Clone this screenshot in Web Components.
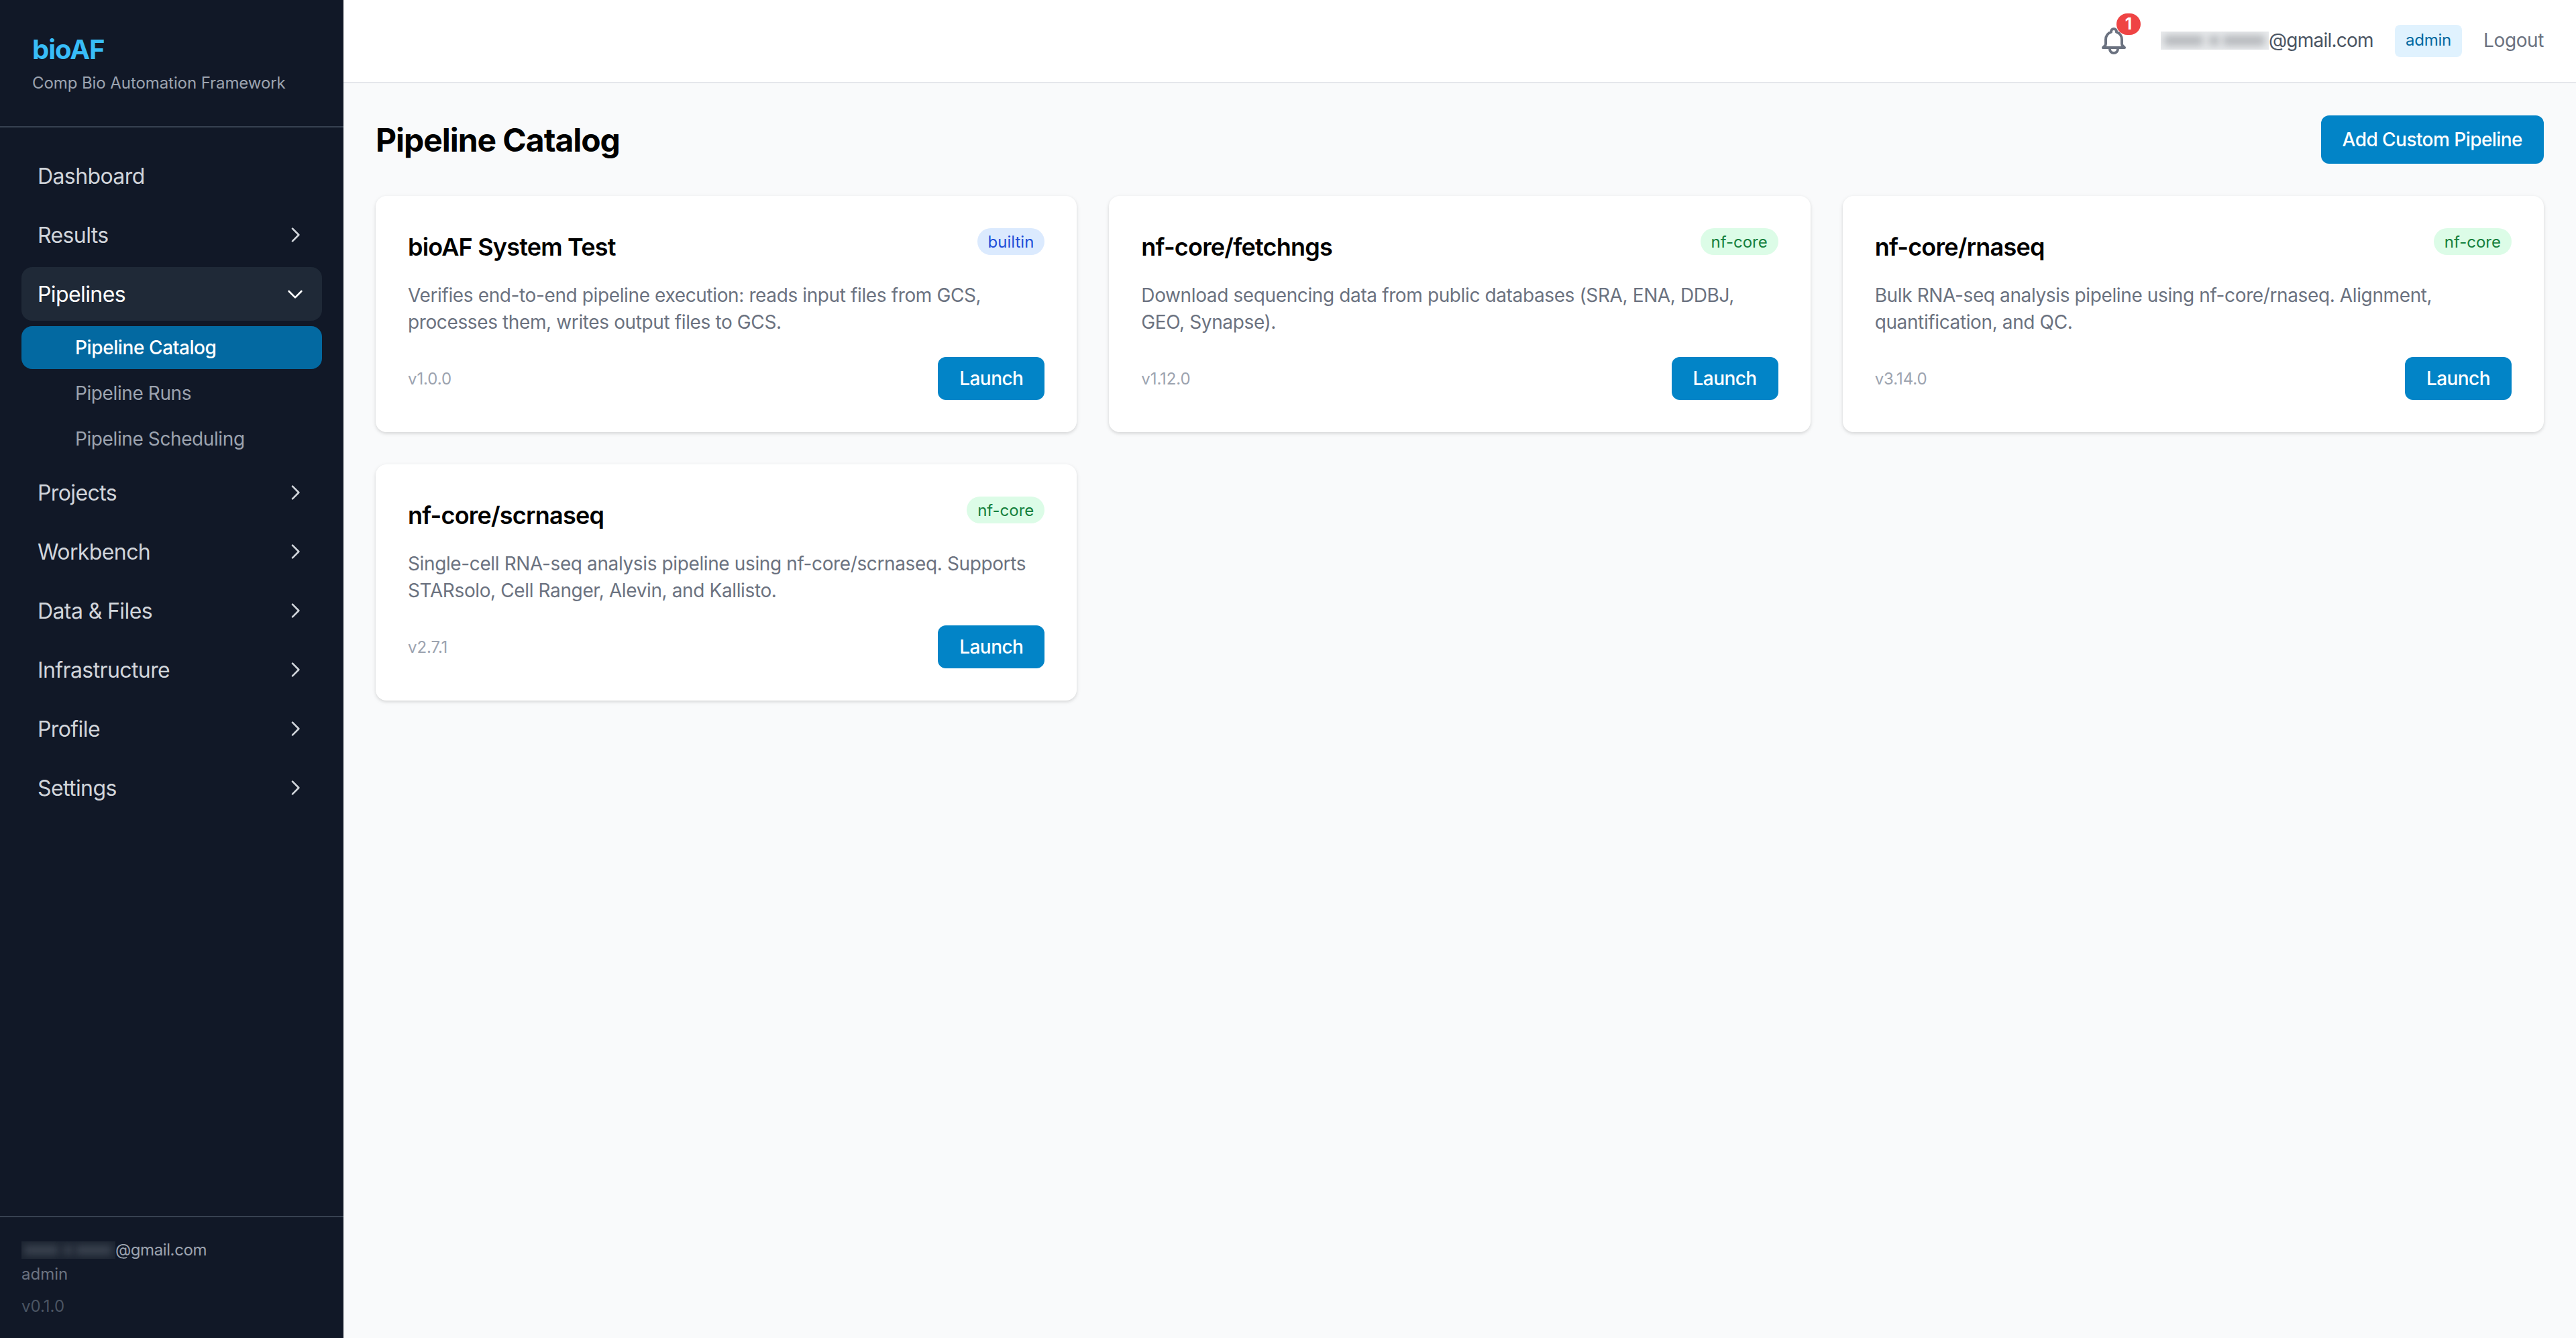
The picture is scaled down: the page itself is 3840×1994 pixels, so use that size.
<!DOCTYPE html>
<html lang="en"><head><meta charset="utf-8"><title>bioAF</title>
<style>
html,body{margin:0;height:100%;}
body{font-family:Inter,"Liberation Sans",sans-serif;background:#f9fafb;color:#000;}
</style></head><body>
<bio-app>
  <bio-sidebar slot="side" user-role="admin" version="v0.1.0">
    <nav-item>Dashboard</nav-item>
    <nav-item chevron="right">Results</nav-item>
    <nav-item chevron="down" open>Pipelines</nav-item>
    <sub-list>
      <sub-item active>Pipeline Catalog</sub-item>
      <sub-item>Pipeline Runs</sub-item>
      <sub-item>Pipeline Scheduling</sub-item>
    </sub-list>
    <nav-item chevron="right">Projects</nav-item>
    <nav-item chevron="right">Workbench</nav-item>
    <nav-item chevron="right">Data &amp; Files</nav-item>
    <nav-item chevron="right">Infrastructure</nav-item>
    <nav-item chevron="right">Profile</nav-item>
    <nav-item chevron="right">Settings</nav-item>
  </bio-sidebar>
  <top-bar slot="top"></top-bar>
  <page-head><action-button size="lg">Add Custom Pipeline</action-button></page-head>
  <card-grid>
    <pipeline-card name="bioAF System Test" tag="builtin" version="v1.0.0">Verifies end-to-end pipeline execution: reads input files from GCS, processes them, writes output files to GCS.</pipeline-card>
    <pipeline-card name="nf-core/fetchngs" tag="nf-core" version="v1.12.0">Download sequencing data from public databases (SRA, ENA, DDBJ, GEO, Synapse).</pipeline-card>
    <pipeline-card name="nf-core/rnaseq" tag="nf-core" version="v3.14.0">Bulk RNA-seq analysis pipeline using nf-core/rnaseq. Alignment, quantification, and QC.</pipeline-card>
    <pipeline-card name="nf-core/scrnaseq" tag="nf-core" version="v2.7.1">Single-cell RNA-seq analysis pipeline using nf-core/scrnaseq. Supports STARsolo, Cell Ranger, Alevin, and Kallisto.</pipeline-card>
  </card-grid>
</bio-app>
<script>
const def=(name,html,init)=>customElements.define(name,class extends HTMLElement{
  constructor(){super();this.attachShadow({mode:'open'});}
  connectedCallback(){this.shadowRoot.innerHTML=typeof html==='function'?html(this):html;}
});
const chev={right:'M9 5l7 7-7 7',down:'M19 9l-7 7-7-7'};

def('bio-app',`<style>
:host{display:grid;grid-template-columns:512px 1fr;grid-template-rows:124px 1fr;height:100vh;min-height:1994px;box-sizing:border-box}
.side{grid-row:1/3;display:flex;min-height:0}
.top{display:flex;min-width:0}
main{padding:48px;min-width:0}
</style><div class="side"><slot name="side"></slot></div><div class="top"><slot name="top"></slot></div><main><slot></slot></main>`);

def('redact-blur',e=>{const dark=e.hasAttribute('dark');const w=e.getAttribute('w'),h=e.getAttribute('h');
return `<style>
:host{display:inline-block;width:${w}px;height:${h}px;overflow:hidden;position:relative;vertical-align:middle;background:${dark?'#1c2431':'#e9ebed'}}
i{position:absolute;top:6px;bottom:6px;background:${dark?'#3b4350':'#b4b7bb'};filter:blur(6px)}
</style><i style="left:3%;width:36%"></i><i style="left:45%;width:9%"></i><i style="left:58%;width:38%"></i>`});

def('bio-sidebar',e=>`<style>
:host{display:flex;flex-direction:column;width:512px;background:#111827;color:#d1d5db;box-sizing:border-box}
header{padding:46px 48px 48px;border-bottom:2px solid #374151}
h1{margin:0;font-size:40px;line-height:56px;font-weight:700;color:#38bdf8;letter-spacing:-1px}
p{margin:6px 0 0;font-size:24px;line-height:32px;color:#9ca3af;letter-spacing:-.08px}
nav{flex:1;padding:32px 32px;display:flex;flex-direction:column;gap:8px}
footer{border-top:2px solid #374151;padding:33px 32px 31px;font-size:24px;line-height:32px;color:#9ca3af}
.mail{display:flex;align-items:center;letter-spacing:-.4px}
.role{margin-top:4px;color:#6b7280}
.ver{margin-top:16px;color:#4b5563}
</style>
<header><h1>bioAF</h1><p>Comp Bio Automation Framework</p></header>
<nav><slot></slot></nav>
<footer><div class="mail"><redact-blur dark w="140" h="26"></redact-blur><span>@gmail.com</span></div><div class="role">${e.getAttribute('user-role')}</div><div class="ver">${e.getAttribute('version')}</div></footer>`);

def('nav-item',e=>{const c=e.getAttribute('chevron'),open=e.hasAttribute('open');
return `<style>
:host{display:flex;align-items:center;justify-content:space-between;height:80px;padding:0 24px;box-sizing:border-box;border-radius:16px;font-size:32px;letter-spacing:-.6px;font-weight:400;color:${open?'#fff':'#d1d5db'};background:${open?'#1f2937':'transparent'}}
svg{width:32px;height:32px;flex:none;fill:none;stroke:currentColor;stroke-width:2;stroke-linecap:round;stroke-linejoin:round}
</style><span><slot></slot></span>${c?`<svg viewBox="0 0 24 24"><path d="${chev[c]}"/></svg>`:''}`});

def('sub-list',`<style>:host{display:flex;flex-direction:column;gap:4px}</style><slot></slot>`);
def('sub-item',e=>{const a=e.hasAttribute('active');
return `<style>
:host{display:flex;align-items:center;height:64px;padding-left:80px;border-radius:16px;font-size:28px;letter-spacing:-.4px;font-weight:${a?500:400};color:${a?'#fff':'#9ca3af'};background:${a?'#0369a1':'transparent'}}
</style><slot></slot>`});

def('top-bar',`<style>
:host{display:flex;flex:1;align-items:center;justify-content:flex-end;height:124px;box-sizing:border-box;padding:0 48px;background:#fff;border-bottom:2px solid #e5e7eb;gap:32px;font-size:28px;color:#4b5563}
.bell{position:relative;width:48px;height:48px;margin-right:14px}
.bell svg{width:48px;height:48px;fill:none;stroke:#6b7280;stroke-width:2;stroke-linecap:round;stroke-linejoin:round;display:block}
.count{position:absolute;left:28px;top:-17px;min-width:36px;height:32px;border-radius:16px;background:#ef4444;color:#fff;font-size:24px;font-weight:700;line-height:32px;text-align:center}
.mail{display:flex;align-items:center;letter-spacing:-.75px;padding-bottom:2px}
.role{height:48px;line-height:46px;padding:0 16px;border-radius:8px;background:#e0f2fe;color:#0369a1;font-size:24px;letter-spacing:-.2px}
.out{color:#6b7280;letter-spacing:-.4px;padding-bottom:2px}
</style>
<div class="bell"><svg viewBox="0 0 24 24"><path d="M15 17h5l-1.405-1.405A2.032 2.032 0 0118 14.158V11a6.002 6.002 0 00-4-5.659V5a2 2 0 10-4 0v.341C7.67 6.165 6 8.388 6 11v3.159c0 .538-.214 1.055-.595 1.436L4 17h5m6 0v1a3 3 0 11-6 0v-1m6 0H9"/></svg><span class="count">1</span></div>
<div class="mail"><redact-blur w="161" h="27"></redact-blur><span>@gmail.com</span></div>
<div class="role">admin</div><div class="out">Logout</div>`);

def('page-head',`<style>
:host{display:flex;align-items:center;justify-content:space-between;margin-bottom:48px}
h2{margin:0;padding-top:2px;font-size:48px;line-height:64px;font-weight:700;color:#000;letter-spacing:-1.05px}
</style><h2>Pipeline Catalog</h2><slot></slot>`);

def('action-button',e=>{const lg=e.getAttribute('size')==='lg';
return `<style>
:host{display:inline-block;height:${lg?72:64}px;line-height:${lg?72:64}px;padding:0 32px;border-radius:12px;background:#0284c7;color:#fff;font-size:28px;font-weight:500;white-space:nowrap;letter-spacing:-.55px}
</style><slot></slot>`});

def('card-grid',`<style>:host{display:grid;grid-template-columns:repeat(3,1fr);gap:48px}</style><slot></slot>`);

def('tag-pill',e=>{const b=e.textContent.trim()==='builtin';
return `<style>
:host{display:inline-block;height:40px;line-height:42px;padding:0 16px;border-radius:20px;font-size:24px;letter-spacing:0;background:${b?'#dbeafe':'#dcfce7'};color:${b?'#1d4ed8':'#15803d'}}
</style><slot></slot>`});

def('pipeline-card',e=>`<style>
:host{display:block;background:#fff;border-radius:16px;padding:48px;box-sizing:border-box;box-shadow:0 2px 6px rgba(0,0,0,.1),0 2px 4px rgba(0,0,0,.06)}
.head{display:flex;justify-content:space-between;align-items:flex-start}
h3{margin:0;font-size:36px;line-height:56px;font-weight:600;color:#000;letter-spacing:-.8px}
p{margin:24px 0 0;font-size:28px;line-height:40px;color:#6b7280;letter-spacing:-.38px}
.foot{display:flex;justify-content:space-between;align-items:center;margin-top:32px}
.v{font-size:24px;line-height:32px;padding-top:2px;color:#9ca3af;letter-spacing:-.1px}
</style>
<div class="head"><h3>${e.getAttribute('name')}</h3><tag-pill>${e.getAttribute('tag')}</tag-pill></div>
<p><slot></slot></p>
<div class="foot"><span class="v">${e.getAttribute('version')}</span><action-button>Launch</action-button></div>`);
</script>
</body></html>
